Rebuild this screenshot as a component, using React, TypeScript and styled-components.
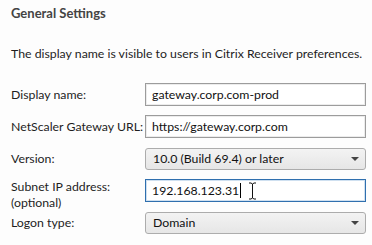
import styled, { createGlobalStyle } from "styled-components";

const GlobalStyle = createGlobalStyle`
  html, body {
    margin: 0;
    padding: 0;
    background: #fdfdfd;
  }
  body {
    font-family: Lato, "Open Sans", sans-serif;
    font-size: 12.3px;
    color: #1e1e1e;
  }
`;

export default function App() {
  return (
    <>
      <GlobalStyle />
      <Page>
        <Heading>General Settings</Heading>
        <Intro>
          The display name is visible to users in Citrix Receiver preferences.
        </Intro>

        <Form>
          <Label>Display name:</Label>
          <TextBox>gateway.corp.com-prod</TextBox>

          <Label>NetScaler Gateway URL:</Label>
          <TextBox>https://gateway.corp.com</TextBox>

          <Label>Version:</Label>
          <Select>
            <span>10.0 (Build 69.4) or later</span>
            <Arrow />
          </Select>

          <Label $twoLines>
            Subnet IP address:
            <br />
            (optional)
          </Label>
          <TextBox $focused>
            192.168.123.31
            <Caret />
            <IBeam width="9" height="18" viewBox="0 0 9 18">
              <path
                d="M1 1h2l1.5 1L6 1h2M4.5 2v14M1 17h2l1.5-1L6 17h2"
                fill="none"
                stroke="#111"
                strokeWidth="1"
              />
            </IBeam>
          </TextBox>

          <Label>Logon type:</Label>
          <Select>
            <span>Domain</span>
            <Arrow />
          </Select>
        </Form>
      </Page>
    </>
  );
}

const Page = styled.div`
  width: 372px;
  height: 245px;
  padding: 5px 6px 0 11px;
  box-sizing: border-box;
  overflow: hidden;
`;

const Heading = styled.h2`
  margin: 0;
  font-size: 13px;
  font-weight: 700;
  color: #444;
  line-height: 16px;
`;

const Intro = styled.p`
  margin: 25px 0 0;
  line-height: 16px;
  white-space: nowrap;
`;

const Form = styled.div`
  display: grid;
  grid-template-columns: 134px 221px;
  grid-auto-rows: 23px;
  row-gap: 9px;
  margin-top: 21px;
  align-items: center;
`;

const Label = styled.div<{ $twoLines?: boolean }>`
  line-height: ${(p) => (p.$twoLines ? "16px" : "20px")};
  margin-top: ${(p) => (p.$twoLines ? "9px" : "0")};
  white-space: nowrap;
`;

const TextBox = styled.div<{ $focused?: boolean }>`
  position: relative;
  height: 23px;
  box-sizing: border-box;
  border: 1px solid ${(p) => (p.$focused ? "#2f6fae" : "#9c9c9c")};
  box-shadow: inset 0 0 0 1px ${(p) => (p.$focused ? "#cfe0f0" : "#ececec")};
  background: #fff;
  padding: 0 6px;
  display: flex;
  align-items: center;
  color: #111;
`;

const Caret = styled.span`
  display: inline-block;
  width: 1px;
  height: 15px;
  background: #000;
  margin-left: 1px;
`;

const IBeam = styled.svg`
  position: absolute;
  left: 102px;
  top: 2px;
`;

const Select = styled.div`
  height: 22px;
  box-sizing: border-box;
  border: 1px solid #acacac;
  border-radius: 3px;
  background: linear-gradient(#f3f3f3, #e6e6e6);
  padding: 0 6px 0 7px;
  display: flex;
  align-items: center;
  justify-content: space-between;
  color: #111;
`;

const Arrow = styled.span`
  width: 0;
  height: 0;
  border-left: 4px solid transparent;
  border-right: 4px solid transparent;
  border-top: 4px solid #444;
`;
